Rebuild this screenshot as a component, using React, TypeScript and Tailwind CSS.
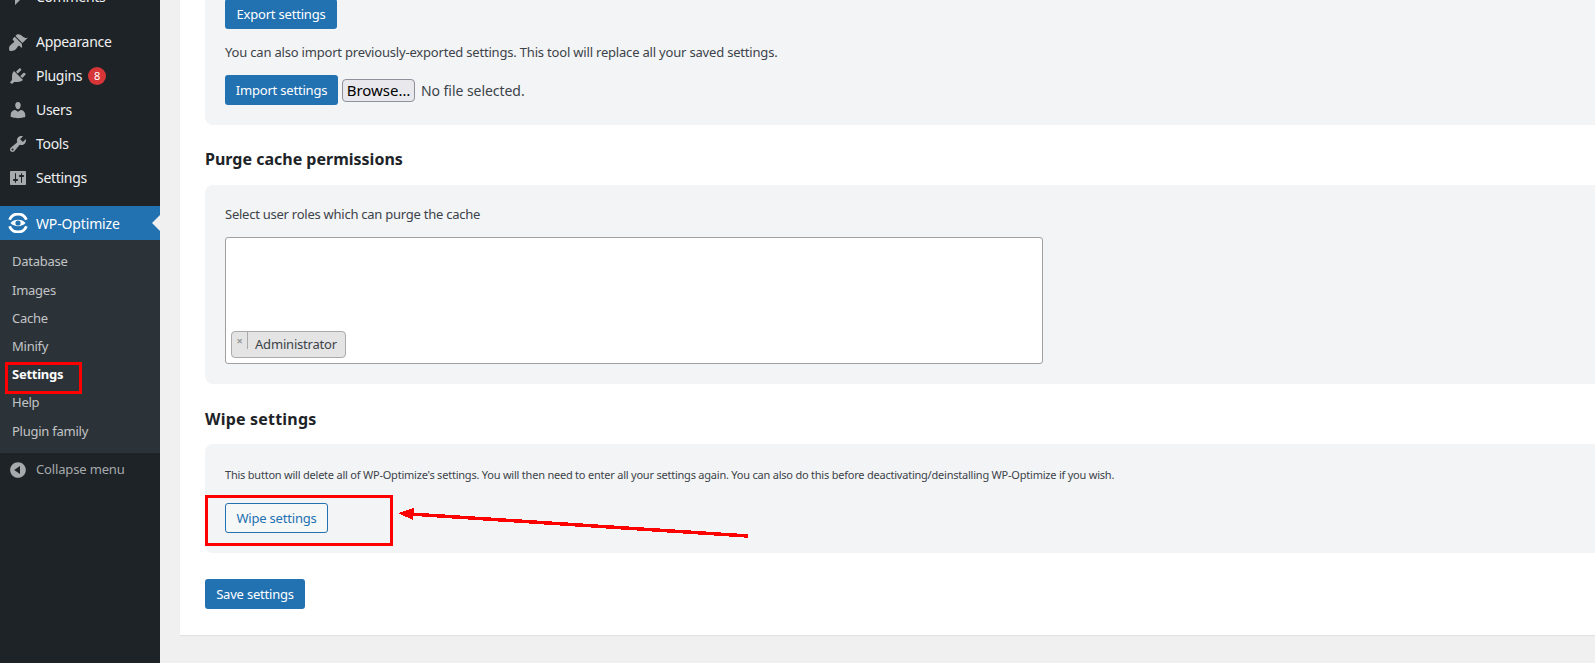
import React from "react";

const P = {
  comments: "M5 2h9c1.1 0 2 .9 2 2v7c0 1.1-.9 2-2 2h-2l-5 5v-5H5c-1.1 0-2-.9-2-2V4c0-1.1.9-2 2-2z",
  appearance: "M14.48 11.06L7.41 3.99l1.5-1.5c.5-.56 2.3-.47 3.51.32 1.21.8 1.43 1.28 2.91 2.1 1.18.64 2.45 1.26 4.45.85zm-.71.71L6.7 4.7 4.93 6.47c-.39.39-.39 1.02 0 1.41l1.06 1.06c.39.39.39 1.03 0 1.42-.6.6-1.43 1.11-2.21 1.69-.35.26-.7.53-1.01.84C1.43 13.71.9 15.3 1.2 17.9c.2.6.5.9 1.1 1 2.5.2 4.1-.3 5.5-1.6.31-.31.58-.66.84-1.01.58-.78 1.09-1.61 1.69-2.21.39-.39 1.03-.39 1.42 0l1.06 1.06c.39.39 1.02.39 1.41 0z",
  plugins: "M13.11 4.36L9.87 7.6 8 5.73l3.24-3.24c.35-.34 1.05-.2 1.56.32.52.51.66 1.21.31 1.55zm-8 1.77l.91-1.12 9.01 9.01-1.19.84c-.71.71-2.63 1.16-3.82 1.16H6.14L4.9 17.26c-.59.59-1.54.59-2.12 0-.59-.58-.59-1.53 0-2.12l1.24-1.24v-3.88c0-1.13.4-3.19 1.09-3.89zm7.26 3.97l3.24-3.24c.34-.35 1.04-.21 1.55.31.52.51.66 1.21.31 1.55l-3.24 3.25z",
  users: "M10 9.25c-2.27 0-2.73-3.44-2.73-3.44C7 4.02 7.82 2 9.97 2c2.16 0 2.98 2.02 2.71 3.81 0 0-.41 3.44-2.68 3.44zm0 2.57L12.72 10c2.39 0 4.52 2.33 4.52 4.53v2.49s-3.65 1.13-7.24 1.13c-3.65 0-7.24-1.13-7.24-1.13v-2.49c0-2.25 1.94-4.48 4.47-4.48z",
  tools: "M16.68 9.77c-1.34 1.34-3.3 1.67-4.95.99l-5.41 6.52c-.99.99-2.59.99-3.58 0s-.99-2.59 0-3.57l6.52-5.42c-.68-1.65-.35-3.61.99-4.95 1.28-1.28 3.12-1.62 4.72-1.06l-2.89 2.89 2.82 2.82 2.86-2.87c.53 1.58.18 3.39-1.08 4.65zM3.81 16.21c.4.39 1.04.39 1.43 0 .4-.4.4-1.04 0-1.43-.39-.4-1.03-.4-1.43 0-.39.39-.39 1.03 0 1.43z",
  settings: "M18 16V4c0-.55-.45-1-1-1H3c-.55 0-1 .45-1 1v12c0 .55.45 1 1 1h14c.55 0 1-.45 1-1zM8 11h1c.55 0 1 .45 1 1s-.45 1-1 1H8v1.5c0 .28-.22.5-.5.5s-.5-.22-.5-.5V13H6c-.55 0-1-.45-1-1s.45-1 1-1h1V5.5c0-.28.22-.5.5-.5s.5.22.5.5V11zm5-2h-1c-.55 0-1-.45-1-1s.45-1 1-1h1V5.5c0-.28.22-.5.5-.5s.5.22.5.5V7h1c.55 0 1 .45 1 1s-.45 1-1 1h-1v5.5c0 .28-.22.5-.5.5s-.5-.22-.5-.5V9z",
  collapse: "M10 2.16c4.33 0 7.84 3.51 7.84 7.84s-3.51 7.84-7.84 7.84S2.16 14.33 2.16 10 5.71 2.16 10 2.16zm2 11.72V6.12L6.18 9.97z",
};

function Dash({ d }: { d: string }) {
  return (
    <svg viewBox="0 0 20 20" className="w-5 h-5 shrink-0 fill-[#a7aaad]">
      <path d={d} />
    </svg>
  );
}

function MenuRow({ icon, label, badge }: { icon: string; label: string; badge?: string }) {
  return (
    <div className="h-[34px] flex items-center pl-[8px] gap-[8px] text-[14px] tracking-[-0.3px] text-[#f0f0f1]">
      <Dash d={icon} />
      <span className="pb-[2px]">{label}</span>
      {badge && (
        <span className="ml-[-2px] w-[18px] h-[18px] rounded-full bg-[#d63638] text-white text-[11px] tracking-normal flex items-center justify-center">
          {badge}
        </span>
      )}
    </div>
  );
}

function Sub({ label, active, last }: { label: string; active?: boolean; last?: boolean }) {
  return (
    <div className={"flex items-center pl-[12px] text-[13px] tracking-[-0.25px] " + (last ? "h-[29px] " : "h-[28.2px] ") + (active ? "font-bold text-white" : "text-[#c3c4c7]")}>
      {label}
    </div>
  );
}

function Btn({ children, w }: { children: React.ReactNode; w: string }) {
  return (
    <button className={"h-[30px] pt-[1px] rounded-[3px] bg-[#2271b1] text-white text-[13px] tracking-[-0.2px] flex items-center justify-center shrink-0 " + w}>
      {children}
    </button>
  );
}

export default function App() {
  return (
    <div className="relative w-[1595px] h-[663px] overflow-hidden flex items-start bg-[#f0f0f1] text-[#3c434a] font-['Noto_Sans','Liberation_Sans',sans-serif]">
      <aside className="w-[160px] shrink-0 bg-[#1d2327] mt-[-20px] h-[690px]">
        <MenuRow icon={P.comments} label="Comments" />
        <div className="h-[11px]" />
        <MenuRow icon={P.appearance} label="Appearance" />
        <MenuRow icon={P.plugins} label="Plugins" badge="8" />
        <MenuRow icon={P.users} label="Users" />
        <MenuRow icon={P.tools} label="Tools" />
        <MenuRow icon={P.settings} label="Settings" />
        <div className="h-[11px]" />
        <div className="relative h-[34px] bg-[#2271b1] flex items-center pl-[8px] gap-[8px] text-[14px] tracking-[-0.15px] text-white">
          <svg viewBox="0 0 20 20" className="w-5 h-5 shrink-0" fill="none">
            <path d="M1.6 6.8A9 9 0 0 1 18.4 6.8" stroke="#fff" strokeWidth="2.8" />
            <path d="M1.6 13.2A9 9 0 0 0 18.4 13.2" stroke="#fff" strokeWidth="2.8" />
            <path d="M2.5 10C6 5.8 14 5.8 17.5 10C14 14.2 6 14.2 2.5 10Z" fill="#fff" />
            <circle cx="10" cy="10" r="2.6" fill="#2271b1" />
          </svg>
          <span>WP-Optimize</span>
          <span className="absolute right-0 top-[9px] w-0 h-0 border-y-[8px] border-y-transparent border-r-[8px] border-r-[#f0f0f1]" />
        </div>
        <div className="bg-[#2c3338] pt-[8px] pb-[7px]">
          <Sub label="Database" />
          <Sub label="Images" />
          <Sub label="Cache" />
          <Sub label="Minify" />
          <Sub label="Settings" active />
          <Sub label="Help" />
          <Sub label="Plugin family" last />
        </div>
        <div className="h-[34px] flex items-center pl-[8px] gap-[8px] text-[13px] tracking-[-0.15px] text-[#a7aaad]">
          <Dash d={P.collapse} />
          <span className="pb-[1px]">Collapse menu</span>
        </div>
      </aside>

      <main className="flex-1 ml-[20px] bg-white h-[665px] mt-[-30px] pl-[25px] shadow-[0_1px_1px_rgba(0,0,0,0.06)] min-w-0">
        <section className="bg-[#f3f4f5] rounded-l-[8px] h-[155px] pl-[20px] pt-[29px]">
          <Btn w="w-[112px]">Export settings</Btn>
          <p className="text-[13px] tracking-[-0.19px] mt-[13px] leading-[20px]">
            You can also import previously-exported settings. This tool will replace all your saved settings.
          </p>
          <div className="flex items-center mt-[13px]">
            <Btn w="w-[113px]">Import settings</Btn>
            <button className="ml-[4px] w-[73px] h-[23px] rounded-[4px] border border-[#8f8f9d] bg-[#e9e9ed] text-black text-[15px] leading-none">
              Browse…
            </button>
            <span className="ml-[6px] text-[14px] tracking-[-0.05px]">No file selected.</span>
          </div>
        </section>

        <h2 className="mt-[22px] h-[24px] text-[16px] leading-[24px] font-bold text-[#1d2327]">Purge cache permissions</h2>

        <section className="mt-[14px] bg-[#f3f4f5] rounded-l-[8px] h-[199px] pl-[20px] pt-[19px]">
          <p className="text-[13px] tracking-[-0.25px] leading-[20px]">Select user roles which can purge the cache</p>
          <div className="mt-[13px] w-[818px] h-[127px] bg-white border border-[#a0a0a0] rounded-[3px] flex items-end pl-[5px] pb-[5px]">
            <div className="w-[115px] h-[27px] bg-[#e4e4e4] border border-[#aaaaaa] rounded-[4px] flex text-[13px] tracking-[-0.19px]">
              <span className="w-[16px] h-[17px] border-r border-[#aaaaaa] text-[#999] text-[11px] font-bold leading-[17px] text-center">×</span>
              <span className="pl-[7px] leading-[25px]">Administrator</span>
            </div>
          </div>
        </section>

        <h2 className="mt-[23px] h-[24px] text-[16px] leading-[24px] font-bold tracking-[0.2px] text-[#1d2327]">Wipe settings</h2>

        <section className="mt-[13px] bg-[#f3f4f5] rounded-l-[8px] h-[109px] pl-[20px] pt-[21px]">
          <p className="text-[11px] tracking-[-0.22px] leading-[20px]">
            This button will delete all of WP-Optimize's settings. You will then need to enter all your settings again. You can also do this before deactivating/deinstalling WP-Optimize if you wish.
          </p>
          <button className="mt-[18px] w-[103px] h-[30px] pt-[1px] rounded-[3px] border border-[#2271b1] bg-[#f6f7f7] text-[#2271b1] text-[13px] tracking-[-0.2px]">
            Wipe settings
          </button>
        </section>

        <div className="mt-[26px]">
          <Btn w="w-[100px]">Save settings</Btn>
        </div>
      </main>

      <div className="absolute left-[5px] top-[362px] w-[77px] h-[32px] border-[3px] border-[#ff0000]" />
      <div className="absolute left-[205px] top-[495px] w-[188px] h-[51px] border-[3px] border-[#ff0000]" />
      <svg className="absolute left-[390px] top-[500px]" width="370" height="45" viewBox="0 0 370 45" fill="none" shapeRendering="crispEdges">
        <path d="M358 36L20 14" stroke="#ff0000" strokeWidth="3.5" />
        <path d="M8 13L24 8L23 20Z" fill="#ff0000" />
      </svg>
    </div>
  );
}
